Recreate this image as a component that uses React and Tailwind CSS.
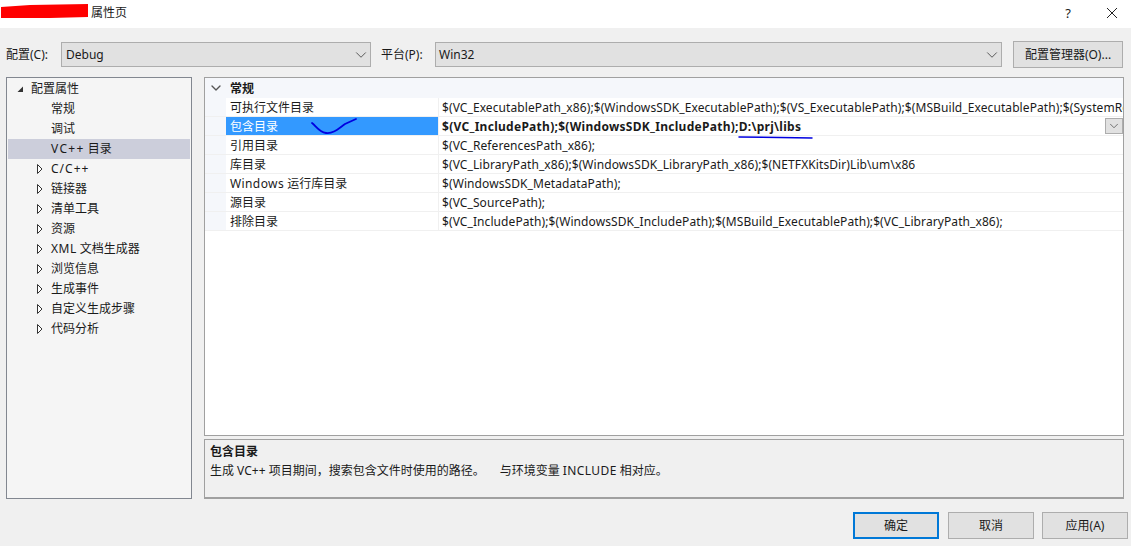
import React from 'react';
import { ChevronDown } from 'lucide-react';

const FONT = "font-['Noto_Sans','Noto_Sans_CJK_SC',sans-serif]";

const treeItems = [
  { id: 'root', label: '配置属性', indent: 'pl-[23px]', arrow: 'open' },
  { id: 'general', label: '常规', indent: 'pl-[43px]' },
  { id: 'debug', label: '调试', indent: 'pl-[43px]' },
  { id: 'dirs', label: <><span className="tracking-[1.3px]">VC++</span> 目录</>, indent: 'pl-[43px]', active: true },
  { id: 'cpp', label: <span className="tracking-[1px]">C/C++</span>, indent: 'pl-[43px]', arrow: 'closed' },
  { id: 'linker', label: '链接器', indent: 'pl-[43px]', arrow: 'closed' },
  { id: 'manifest', label: '清单工具', indent: 'pl-[43px]', arrow: 'closed' },
  { id: 'res', label: '资源', indent: 'pl-[43px]', arrow: 'closed' },
  { id: 'xml', label: <><span className="tracking-[0.5px]">XML</span> 文档生成器</>, indent: 'pl-[43px]', arrow: 'closed' },
  { id: 'browse', label: '浏览信息', indent: 'pl-[43px]', arrow: 'closed' },
  { id: 'events', label: '生成事件', indent: 'pl-[43px]', arrow: 'closed' },
  { id: 'custom', label: '自定义生成步骤', indent: 'pl-[43px]', arrow: 'closed' },
  { id: 'analysis', label: '代码分析', indent: 'pl-[43px]', arrow: 'closed' },
];

const rows = [
  { name: '可执行文件目录', value: '$(VC_ExecutablePath_x86);$(WindowsSDK_ExecutablePath);$(VS_ExecutablePath);$(MSBuild_ExecutablePath);$(SystemRoot)\\SysWow64;$(FxCopDir);$(PATH);' },
  { name: '包含目录', value: '$(VC_IncludePath);$(WindowsSDK_IncludePath);D:\\prj\\libs', selected: true },
  { name: '引用目录', value: '$(VC_ReferencesPath_x86);' },
  { name: '库目录', value: '$(VC_LibraryPath_x86);$(WindowsSDK_LibraryPath_x86);$(NETFXKitsDir)Lib\\um\\x86' },
  { name: <span><span className="tracking-[0.4px]">Windows</span> 运行库目录</span>, value: '$(WindowsSDK_MetadataPath);' },
  { name: '源目录', value: '$(VC_SourcePath);' },
  { name: '排除目录', value: '$(VC_IncludePath);$(WindowsSDK_IncludePath);$(MSBuild_ExecutablePath);$(VC_LibraryPath_x86);' },
];

const Combo = ({ value, className }) => (
  <div className={`h-[25px] bg-[#e1e1e1] border border-[#adadad] flex items-center justify-between ${className}`}>
    <span>{value}</span>
    <ChevronDown size={18} strokeWidth={1.3} className="text-[#555555]" />
  </div>
);

const DialogButton = ({ children, className = '' }) => (
  <button className={`h-[27px] bg-[#e1e1e1] border border-[#adadad] flex items-center justify-center ${className}`}>
    {children}
  </button>
);

const TreeArrow = ({ type }) =>
  type === 'open' ? (
    <svg width="7" height="7" viewBox="0 0 7 7" className="absolute left-[9px] top-[7px]">
      <path d="M6 0.5 V6 H0.5 Z" fill="#333333" />
    </svg>
  ) : (
    <svg width="6" height="10" viewBox="0 0 6 10" className="absolute left-[29px] top-[5px]">
      <path d="M0.5 0.5 L5 5 L0.5 9.5 Z" fill="#ffffff" stroke="#333333" strokeWidth="1" />
    </svg>
  );

const App = () => {
  return (
    <div className={`relative w-[1131px] h-[546px] overflow-hidden bg-[#f0f0f0] text-[12px] leading-[18px] text-[#1a1a1a] ${FONT}`}>
      {/* Title bar */}
      <div className="h-[28px] bg-white flex items-center justify-between pl-[91px] pr-[13px] pb-[3px]">
        <span>属性页</span>
        <div className="flex items-center gap-[35px]">
          <span className="text-[13px]">?</span>
          <svg width="12" height="12" viewBox="0 0 12 12" fill="none" stroke="#222222" strokeWidth="1">
            <path d="M1 1 L11 11 M11 1 L1 11" />
          </svg>
        </div>
      </div>

      {/* Config toolbar */}
      <div className="h-[49px] flex items-center pl-[6px] pr-[8px] pt-[4px]">
        <span className="w-[55px]">配置(C):</span>
        <Combo value="Debug" className="w-[310px] pl-[4px]" />
        <span className="ml-[10px] w-[54px]">平台(P):</span>
        <Combo value="Win32" className="w-[567px] pl-[3px]" />
        <DialogButton className="ml-[11px] w-[110px]">配置管理器(O)...</DialogButton>
      </div>

      {/* Main */}
      <div className="flex pl-[6px] pr-[7px] gap-[12px] h-[422px]">
        <div className="w-[186px] bg-[#f5f5f5] border border-[#828790] pl-[1px] pr-[1px] pt-[1px]">
          {treeItems.map((item) => (
            <div
              key={item.id}
              className={`relative h-[20px] flex items-center ${item.indent} ${item.active ? 'bg-[#cccedb]' : ''}`}
            >
              {item.arrow && <TreeArrow type={item.arrow} />}
              <span>{item.label}</span>
            </div>
          ))}
        </div>

        <div className="flex-1 min-w-0 flex flex-col">
          <div className="h-[360px] bg-white border border-[#a0a0a0] overflow-hidden">
            <div className="h-[20px] bg-[#f5f7fb] flex items-center">
              <div className="w-[21px] flex justify-center">
                <ChevronDown size={16} strokeWidth={2} className="text-[#555555]" />
              </div>
              <span className="pl-[4px] pt-[2px] font-bold">常规</span>
            </div>
            {rows.map((row, i) => (
              <div key={i} className="h-[19px] flex border-b border-[#f0f0f0]">
                <div className="w-[21px] shrink-0 bg-[#f5f7fb]" />
                <div className={`w-[212px] shrink-0 pl-[4px] pt-[2px] flex items-center ${row.selected ? 'bg-[#3399ff] text-white' : ''}`}>
                  {row.name}
                </div>
                <div className="w-px shrink-0 bg-[#f0f0f0]" />
                <div className={`relative flex-1 min-w-0 pl-[3px] pt-[2px] flex items-center whitespace-nowrap overflow-hidden ${row.selected ? 'font-bold tracking-[0.28px]' : 'tracking-[0.09px]'}`}>
                  {row.value}
                  {row.selected && (
                    <div className="absolute right-0 top-[1px] h-[16px] w-[18px] bg-[#e1e1e1] border border-[#adadad] flex items-center justify-center">
                      <ChevronDown size={14} strokeWidth={1.2} className="text-[#444444]" />
                    </div>
                  )}
                </div>
              </div>
            ))}
          </div>

          {/* Description */}
          <div className="mt-[3px] h-[60px] border border-[#a0a0a0] border-b-2 pl-[5px] pt-[3px]">
            <div className="font-bold">包含目录</div>
            <div className="mt-[1px]">
              生成 VC++ 项目期间，搜索包含文件时使用的路径。
              <span className="ml-[15px]">与环境变量 <span className="tracking-[0.4px]">INCLUDE</span> 相对应。</span>
            </div>
          </div>
        </div>
      </div>

      {/* Footer buttons */}
      <div className="flex justify-end gap-[8px] pr-[3px] pt-[13px]">
        <DialogButton className="w-[86px] mr-[1px] !border-2 !border-[#0078d7]">确定</DialogButton>
        <DialogButton className="w-[86px]">取消</DialogButton>
        <DialogButton className="w-[86px]">应用(A)</DialogButton>
      </div>

      {/* Hand-drawn annotations on the screenshot */}
      <svg className="absolute inset-0 pointer-events-none" width="1131" height="546" fill="none">
        <path d="M1 7 L30 5 L88 4 L88 17 L50 18 L1 18 Z" fill="#ff0000" />
        <path d="M312 123 C316 126 319 132 326 133 C333 134 338 129 345 124 L356 119" stroke="#0000e0" strokeWidth="1.8" strokeLinecap="round" />
        <path d="M739 137 L780 137.5 L812 138" stroke="#0000e0" strokeWidth="1.5" strokeLinecap="round" />
      </svg>
    </div>
  );
};

export default App;
